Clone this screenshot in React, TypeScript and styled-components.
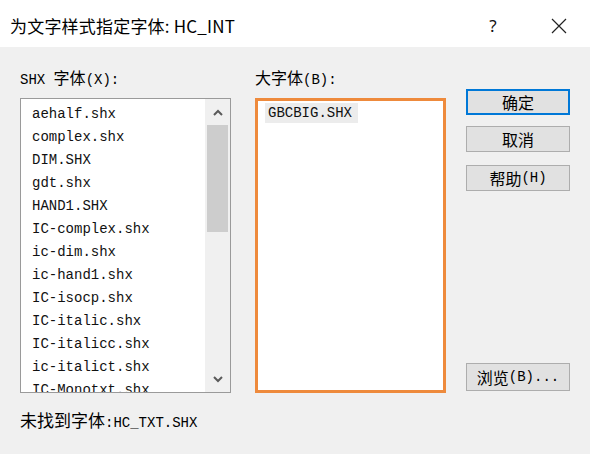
import React from "react";
import styled, { createGlobalStyle } from "styled-components";

const Global = createGlobalStyle`
  html, body { margin: 0; padding: 0; background: #f0f0f0; }
  body { width: 590px; height: 454px; overflow: hidden; }
`;

const MONO = `"Liberation Mono", "Noto Sans CJK SC", monospace`;
const CJK = `"Noto Sans CJK SC", "Noto Sans", sans-serif`;

const Window = styled.div`
  width: 590px;
  height: 454px;
  display: flex;
  flex-direction: column;
  background: #f0f0f0;
`;

const TitleBar = styled.div`
  height: 47px;
  background: #ffffff;
  display: flex;
  align-items: center;
  padding-left: 10px;
  padding-top: 4px;
  box-sizing: border-box;
`;

const Title = styled.div`
  flex: 1;
  font-family: ${CJK};
  font-size: 17px;
  color: #000;
  letter-spacing: 0.2px;
`;

const Help = styled.div`
  width: 30px;
  font-family: "Noto Sans", sans-serif;
  font-size: 17px;
  color: #111;
  text-align: center;
  margin-right: 43px;
`;

const Close = styled.div`
  width: 16px;
  height: 16px;
  margin-right: 23px;
  display: flex;
`;

const Body = styled.div`
  flex: 1;
  display: flex;
  padding-left: 20px;
`;

const Column = styled.div<{ $w: number; $ml?: number }>`
  width: ${(p) => p.$w}px;
  margin-left: ${(p) => p.$ml ?? 0}px;
  display: flex;
  flex-direction: column;
`;

const Label = styled.div<{ $mt?: number }>`
  height: 20px;
  line-height: 20px;
  margin-top: ${(p) => p.$mt ?? 20}px;
  font-family: ${MONO};
  font-size: 14px;
  color: #000;
  white-space: nowrap;
`;

const Cjk = styled.span<{ $size?: number }>`
  font-family: ${CJK};
  font-size: ${(p) => p.$size ?? 16}px;
`;

const ListBox = styled.div`
  margin-top: 11px;
  height: 295px;
  box-sizing: border-box;
  border: 1px solid #9a9a9a;
  background: #ffffff;
  display: flex;
  overflow: hidden;
`;

const Items = styled.div`
  flex: 1;
  padding-top: 4px;
  padding-left: 11px;
  overflow: hidden;
`;

const Item = styled.div`
  height: 23px;
  line-height: 23px;
  font-family: ${MONO};
  font-size: 14px;
  color: #111;
  white-space: nowrap;
`;

const ScrollBar = styled.div`
  width: 25px;
  background: #f0f0f0;
  display: flex;
  flex-direction: column;
  align-items: center;
`;

const Arrow = styled.div`
  height: 26px;
  width: 100%;
  display: flex;
  align-items: center;
  justify-content: center;
`;

const Track = styled.div`
  flex: 1;
  width: 100%;
  display: flex;
  flex-direction: column;
  align-items: center;
`;

const Thumb = styled.div`
  width: 21px;
  height: 107px;
  background: #cdcdcd;
`;

const BottomNote = styled.div`
  margin-top: 17px;
  height: 20px;
  line-height: 20px;
  font-family: ${MONO};
  font-size: 14px;
  color: #000;
  white-space: nowrap;
`;

const BigBox = styled.div`
  margin-top: 11px;
  height: 295px;
  box-sizing: border-box;
  border: 3px solid #ee8a3c;
  background: #ffffff;
  padding: 2px 0 0 7px;
`;

const Selected = styled.div`
  display: inline-block;
  height: 20px;
  line-height: 20px;
  padding: 0 6px 0 3px;
  background: #ececec;
  font-family: ${MONO};
  font-size: 14px;
  color: #111;
`;

const Button = styled.div<{ $default?: boolean; $mt: number; $h?: number }>`
  margin-top: ${(p) => p.$mt}px;
  height: ${(p) => p.$h ?? 26}px;
  box-sizing: border-box;
  border: ${(p) => (p.$default ? "2px solid #0078d7" : "1px solid #adadad")};
  background: #e1e1e1;
  display: flex;
  align-items: center;
  justify-content: center;
  font-family: ${CJK};
  font-size: 16px;
  color: #000;
  white-space: nowrap;
`;

const Mono = styled.span`
  font-family: ${MONO};
  font-size: 14px;
`;

const files = [
  "aehalf.shx",
  "complex.shx",
  "DIM.SHX",
  "gdt.shx",
  "HAND1.SHX",
  "IC-complex.shx",
  "ic-dim.shx",
  "ic-hand1.shx",
  "IC-isocp.shx",
  "IC-italic.shx",
  "IC-italicc.shx",
  "ic-italict.shx",
  "IC-Monotxt.shx",
];

const Chevron = ({ up }: { up?: boolean }) => (
  <svg width="10" height="7" viewBox="0 0 10 7">
    <path
      d={up ? "M1 6 L5 2 L9 6" : "M1 1 L5 5 L9 1"}
      fill="none"
      stroke="#5a5a5a"
      strokeWidth="2"
    />
  </svg>
);

export default function App() {
  return (
    <Window>
      <Global />
      <TitleBar>
        <Title>为文字样式指定字体: HC_INT</Title>
        <Help>?</Help>
        <Close>
          <svg width="16" height="16" viewBox="0 0 16 16">
            <path d="M1 1 L15 15 M15 1 L1 15" stroke="#222" strokeWidth="1.2" />
          </svg>
        </Close>
      </TitleBar>
      <Body>
        <Column $w={211}>
          <Label>
            SHX <Cjk>字体</Cjk>(X):
          </Label>
          <ListBox>
            <Items>
              {files.map((f) => (
                <Item key={f}>{f}</Item>
              ))}
            </Items>
            <ScrollBar>
              <Arrow>
                <Chevron up />
              </Arrow>
              <Track>
                <Thumb />
              </Track>
              <Arrow>
                <Chevron />
              </Arrow>
            </ScrollBar>
          </ListBox>
          <BottomNote>
            <Cjk $size={17}>未找到字体</Cjk>:HC_TXT.SHX
          </BottomNote>
        </Column>
        <Column $w={191} $ml={24}>
          <Label>
            <Cjk>大字体</Cjk>(B):
          </Label>
          <BigBox>
            <Selected>GBCBIG.SHX</Selected>
          </BigBox>
        </Column>
        <Column $w={104} $ml={20}>
          <Button $default $mt={42}>确定</Button>
          <Button $mt={11}>取消</Button>
          <Button $mt={13}>
            帮助<Mono>(H)</Mono>
          </Button>
          <Button $mt={172} $h={28}>
            浏览<Mono>(B)...</Mono>
          </Button>
        </Column>
      </Body>
    </Window>
  );
}
